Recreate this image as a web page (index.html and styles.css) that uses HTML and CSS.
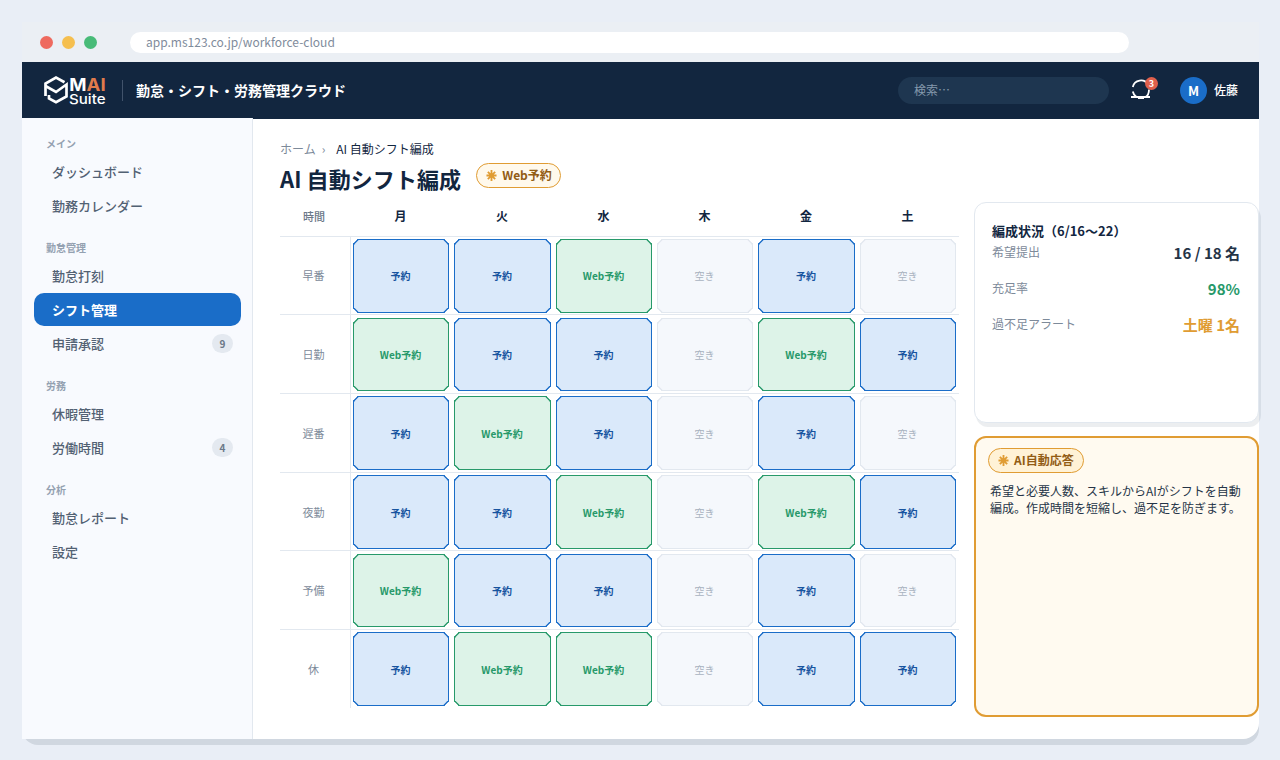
FILE: index.html
```html
<!DOCTYPE html>
<html lang="ja">
<head>
<meta charset="utf-8">
<title>勤怠・シフト・労務管理クラウド</title>
<link rel="stylesheet" href="styles.css">
</head>
<body>
<div class="window">
  <div class="chrome">
    <span class="dot red"></span><span class="dot yellow"></span><span class="dot green"></span>
    <div class="url">app.ms123.co.jp/workforce-cloud</div>
  </div>
  <header class="topbar">
    <svg class="logo" width="64" height="36" viewBox="42 72 64 36">
      <g fill="none" stroke="#fff" stroke-width="2.700" stroke-linejoin="miter">
        <path d="M45.500 96V83.500L56 77.600L64.500 82.300"/>
        <path d="M45.500 86L56 92L66.500 84.500V96.500L56 102.300L49 98.500V95"/>
      </g>
      <text class="logo-main" x="69.300" y="90.500" textLength="36.300" lengthAdjust="spacingAndGlyphs"><tspan fill="#fff">M</tspan><tspan fill="#e07b4c">AI</tspan></text>
      <text class="logo-sub" x="69" y="103.500" textLength="36.500" lengthAdjust="spacingAndGlyphs">Suite</text>
    </svg>
    <span class="divider"></span>
    <span class="product">勤怠・シフト・労務管理クラウド</span>
    <div class="search">検索…</div>
    <div class="bell">
      <svg width="22" height="23" viewBox="1130 79 22 23" fill="none" stroke="#fff" stroke-width="1.800">
        <path d="M1132.800 87A8.300 8.300 0 0 1 1148 84.500M1132.800 91.500Q1133.500 95 1136.500 97M1149 89.500Q1149 95 1145.500 97M1131 97H1150M1138 98.200H1144"/>
      </svg>
      <span class="count">3</span>
    </div>
    <span class="avatar">M</span>
    <span class="user">佐藤</span>
  </header>
  <div class="body">
    <nav class="sidebar">
      <div class="group">メイン</div>
      <div class="item">ダッシュボード</div>
      <div class="item">勤務カレンダー</div>
      <div class="group">勤怠管理</div>
      <div class="item">勤怠打刻</div>
      <div class="item active">シフト管理</div>
      <div class="item">申請承認<span class="badge">9</span></div>
      <div class="group">労務</div>
      <div class="item">休暇管理</div>
      <div class="item">労働時間<span class="badge">4</span></div>
      <div class="group">分析</div>
      <div class="item">勤怠レポート</div>
      <div class="item">設定</div>
    </nav>
    <main class="main">
      <div class="crumbs"><span>ホーム</span><span class="sep">›</span><span class="here">AI 自動シフト編成</span></div>
      <div class="heading">
        <h1>AI 自動シフト編成</h1>
        <span class="pill"><svg class="spark" viewBox="0 0 12 12"><path d="M6 0V12M0.500 6H11.500M2 2L10 10M10 2L2 10"/></svg>Web予約</span>
      </div>
      <div class="columns">
        <section class="schedule">
          <div class="row head"><div class="time">時間</div><div class="cells"><b>月</b><b>火</b><b>水</b><b>木</b><b>金</b><b>土</b></div></div>
          <div class="rows">
            <div class="row"><div class="time">早番</div><div class="cells"><i class="book">予約</i><i class="book">予約</i><i class="web">Web予約</i><i class="free">空き</i><i class="book">予約</i><i class="free">空き</i></div></div>
            <div class="row"><div class="time">日勤</div><div class="cells"><i class="web">Web予約</i><i class="book">予約</i><i class="book">予約</i><i class="free">空き</i><i class="web">Web予約</i><i class="book">予約</i></div></div>
            <div class="row"><div class="time">遅番</div><div class="cells"><i class="book">予約</i><i class="web">Web予約</i><i class="book">予約</i><i class="free">空き</i><i class="book">予約</i><i class="free">空き</i></div></div>
            <div class="row"><div class="time">夜勤</div><div class="cells"><i class="book">予約</i><i class="book">予約</i><i class="web">Web予約</i><i class="free">空き</i><i class="web">Web予約</i><i class="book">予約</i></div></div>
            <div class="row"><div class="time">予備</div><div class="cells"><i class="web">Web予約</i><i class="book">予約</i><i class="book">予約</i><i class="free">空き</i><i class="book">予約</i><i class="free">空き</i></div></div>
            <div class="row"><div class="time">休</div><div class="cells"><i class="book">予約</i><i class="web">Web予約</i><i class="web">Web予約</i><i class="free">空き</i><i class="book">予約</i><i class="book">予約</i></div></div>
          </div>
        </section>
        <aside class="side">
          <div class="card">
            <h2>編成状況（6/16〜22）</h2>
            <div class="stat"><span>希望提出</span><strong>16 / 18 名</strong></div>
            <div class="stat"><span>充足率</span><strong class="good">98%</strong></div>
            <div class="stat"><span>過不足アラート</span><strong class="warn">土曜 1名</strong></div>
          </div>
          <div class="card ai">
            <span class="pill deep"><svg class="spark" viewBox="0 0 12 12"><path d="M6 0V12M0.500 6H11.500M2 2L10 10M10 2L2 10"/></svg>AI自動応答</span>
            <p>希望と必要人数、スキルからAIがシフトを自動<br>編成。作成時間を短縮し、過不足を防ぎます。</p>
          </div>
        </aside>
      </div>
    </main>
  </div>
</div>
</body>
</html>
```
FILE: styles.css
```css
* { box-sizing: border-box; }
body {
  margin: 0;
  padding: 22px 21px 0 22px;
  height: 760px;
  overflow: hidden;
  background: #e9eef6;
  font-family: "Noto Sans CJK JP", sans-serif;
  color: #12263f;
}
.window {
  width: 1237px;
  height: 717px;
  display: flex;
  flex-direction: column;
  background: #fff;
  border-radius: 0 0 16px 16px;
  box-shadow: 0 6px 0 #d0d7e0;
}
.chrome {
  height: 40px;
  flex: none;
  display: flex;
  align-items: center;
  gap: 9px;
  padding: 1px 130px 0 18px;
  background: #ebeff4;
}
.dot { width: 13px; height: 13px; border-radius: 50%; }
.red { background: #ee6a5f; }
.yellow { background: #f5bf4f; }
.green { background: #48bb78; }
.url {
  flex: 1;
  height: 21px;
  margin: 0 0 0 24px;
  padding-left: 16px;
  border-radius: 11px;
  background: #fff;
  color: #7f8c9c;
  font-size: 12px;
  line-height: 20px;
}
.topbar {
  height: 57px;
  flex: none;
  display: flex;
  align-items: center;
  padding: 0 21px 0 20px;
  background: #12263f;
  color: #fff;
}
.logo { margin-bottom: 1px; }
.logo-main { font: 700 17.5px Inter, sans-serif; }
.logo-sub { font: 500 13.5px Inter, sans-serif; fill: #fff; }
.divider { width: 1px; height: 21px; margin: 0 13px 0 16px; background: #41536b; }
.product { margin-bottom: 2px; font-size: 14px; font-weight: 700; line-height: 20px; }
.search {
  width: 211px;
  height: 27px;
  margin-left: auto;
  padding-left: 16px;
  border-radius: 14px;
  background: #1e3650;
  color: #8499ad;
  font-size: 12px;
  line-height: 26px;
}
.bell { position: relative; width: 22px; height: 23px; margin: 0 28px 0 21px; }
.bell svg { display: block; }
.count {
  position: absolute;
  left: 15px;
  top: -2px;
  width: 13px;
  height: 13px;
  border-radius: 50%;
  background: #e0604c;
  font-size: 9px;
  font-weight: 700;
  line-height: 13px;
  text-align: center;
}
.avatar {
  width: 27px;
  height: 27px;
  border-radius: 50%;
  background: #1a6dc8;
  font-size: 13px;
  font-weight: 700;
  line-height: 27px;
  text-align: center;
}
.user { margin-left: 7px; font-size: 12px; font-weight: 500; line-height: 26px; margin-bottom: 1px; }
.body { flex: 1; display: flex; min-height: 0; }
.sidebar {
  width: 231px;
  flex: none;
  margin-top: -1px;
  padding: 1px 11px 0 12px;
  border-right: 1px solid #e2e8ef;
  background: #f8fafe;
}
.group {
  height: 36px;
  padding: 17px 12px 0;
  color: #94a1b1;
  font-size: 10px;
  font-weight: 700;
  line-height: 16px;
}
.item {
  display: flex;
  align-items: center;
  justify-content: space-between;
  height: 33px;
  margin-bottom: 1px;
  padding: 1px 8px 0 18px;
  color: #526173;
  font-size: 13px;
  font-weight: 500;
  line-height: 20px;
}
.active { border-radius: 10px; background: #1a6dc8; color: #fff; font-weight: 700; }
.badge {
  width: 21px;
  height: 19px;
  margin-bottom: 2px;
  border-radius: 10px;
  background: #e4e9f0;
  color: #6b7888;
  font-size: 10px;
  font-weight: 700;
  line-height: 19px;
  text-align: center;
}
.main { flex: 1; padding: 20px 0 0 27px; }
.crumbs { display: flex; height: 20px; color: #7d8a9a; font-size: 12px; line-height: 19px; }
.sep { margin: 0 11px 0 6px; }
.here { color: #12263f; }
.heading { display: flex; height: 43px; align-items: flex-start; }
h1 { margin: 4px 15px 0 0; font-size: 22px; font-weight: 700; line-height: 30px; letter-spacing: .08px; }
.pill {
  display: flex;
  align-items: center;
  height: 25px;
  margin-top: 4px;
  padding: 0 8px 1px 9px;
  border: 1px solid #e09c33;
  border-radius: 13px;
  background: #fff9ec;
  color: #925c14;
  font-size: 12px;
  font-weight: 700;
  line-height: 20px;
}
.spark { width: 11px; height: 11px; margin-right: 5px; fill: none; stroke: #e09c33; stroke-width: 2; }
.columns { display: flex; gap: 15px; }
.schedule { width: 679px; }
.row { display: flex; height: 79px; border-top: 1px solid #e2e8ef; }
.row:nth-child(3n+1) { height: 78px; }
.time {
  width: 71px;
  display: flex;
  align-items: center;
  justify-content: center;
  padding-right: 3px;
  border-right: 1px solid #e2e8ef;
  color: #7d8a9a;
  font-size: 11px;
}
.rows .row:first-child .time { padding-bottom: 1px; }
.cells {
  display: grid;
  grid-template-columns: 96px 97px 96px 96px 97px 96px;
  column-gap: 5px;
  padding: 2px 0 2px 2px;
}
.row:nth-child(3n+1) .cells { padding-bottom: 1px; }
.row:nth-child(3n+2) .cells { padding-top: 3px; }
.cells i, .cells b { display: flex; align-items: center; justify-content: center; padding-right: 1px; }
.cells i {
  border: 1px solid;
  border-radius: 5px;
  corner-shape: bevel;
  font-size: 10px;
  font-style: normal;
  font-weight: 700;
}
.rows .row:first-child i { padding-bottom: 2px; }
.cells b { font-size: 12px; }
.cells .book { border-color: #1a6dc8; background: #dae9fa; color: #17549f; }
.cells .web { border-color: #27996a; background: #ddf3e8; color: #27996a; }
.cells .free { border-color: #e2e8ef; background: #f5f8fc; color: #a9b3c0; font-weight: 400; }
.head.row { height: 34px; border: 0; }
.head .time { border: 0; padding-right: 3px; padding-bottom: 7px; font-weight: 500; color: #6b7888; }
.head.row .cells { padding: 0 0 7px 2px; }
.side { width: 285px; display: flex; flex-direction: column; gap: 13px; }
.card {
  height: 221px;
  padding: 18px 18px 0 17px;
  border: 1px solid #e2e8ef;
  border-radius: 12px;
  background: #fff;
  box-shadow: 2px 4px 0 rgba(18, 38, 63, .08);
}
h2 { margin: 0; font-size: 13px; font-weight: 700; line-height: 20px; }
.stat {
  display: flex;
  justify-content: space-between;
  height: 36px;
  color: #7d8a9a;
  font-size: 12px;
  line-height: 22px;
}
.stat strong { color: #253447; font-size: 15px; font-weight: 700; line-height: 23px; }
.stat .good { color: #27996a; }
.stat .warn { color: #e09c33; }
.card.ai {
  height: 281px;
  padding: 10px 10px 0 12px;
  border: 2px solid #e09c33;
  background: #fffaf0;
  box-shadow: none;
}
.deep { display: inline-flex; margin: 0; padding-right: 9px; background: #fff2d6; vertical-align: top; }
.ai p { margin: 9px 0 0 2px; color: #253447; font-size: 12px; line-height: 17px; white-space: nowrap; }
```
